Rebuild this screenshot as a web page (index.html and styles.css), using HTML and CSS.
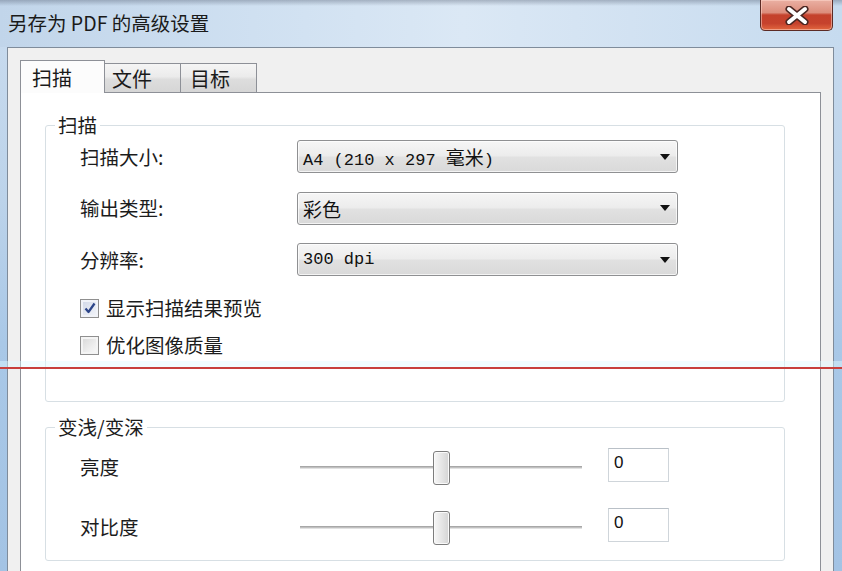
FILE: index.html
```html
<!DOCTYPE html>
<html lang="zh-CN">
<head>
<meta charset="utf-8">
<title>另存为 PDF 的高级设置</title>
<link rel="stylesheet" href="styles.css">
</head>
<body>
<div class="window">
  <div class="titlebar">
    <div class="title">另存为 PDF 的高级设置</div>
    <div class="close">
      <svg width="26" height="19" viewBox="0 0 26 19">
        <path d="M5 3 L21 16 M21 3 L5 16" stroke="#4a2622" stroke-width="7" stroke-linecap="round" fill="none"/>
        <path d="M5 3 L21 16 M21 3 L5 16" stroke="#ffffff" stroke-width="4" stroke-linecap="round" fill="none"/>
      </svg>
    </div>
  </div>
  <div class="client">
    <div class="tabs">
      <div class="tab active">扫描</div>
      <div class="tab t2">文件</div>
      <div class="tab t3">目标</div>
    </div>
    <div class="panel">
      <div class="group g-scan">
        <div class="legend">扫描</div>
        <div class="form-grid">
          <div class="lbl">扫描大小:</div>
          <div class="select"><span class="val">A4 (210 x 297 <span class="cjk">毫米</span>)</span><span class="arrow"></span></div>
          <div class="lbl">输出类型:</div>
          <div class="select"><span class="val"><span class="cjk">彩色</span></span><span class="arrow"></span></div>
          <div class="lbl">分辨率:</div>
          <div class="select"><span class="val">300 dpi</span><span class="arrow"></span></div>
        </div>
        <div class="checks">
          <div class="check"><span class="box checked"><svg width="14" height="14" viewBox="0 0 14 14"><path d="M2.5 7.5 L5.5 11 L11.5 2.5" stroke="#2b4488" stroke-width="2.2" fill="none" stroke-linejoin="round"/></svg></span><span>显示扫描结果预览</span></div>
          <div class="check"><span class="box"></span><span>优化图像质量</span></div>
        </div>
      </div>
      <div class="group g-tone">
        <div class="legend">变浅/变深</div>
        <div class="slider-row first">
          <div class="lbl">亮度</div>
          <div class="track"><div class="thumb"></div></div>
          <div class="num">0</div>
        </div>
        <div class="slider-row">
          <div class="lbl">对比度</div>
          <div class="track"><div class="thumb"></div></div>
          <div class="num">0</div>
        </div>
      </div>
    </div>
  </div>
  <div class="guide"></div>
</div>
</body>
</html>
```

FILE: styles.css
```css
html, body {
  margin: 0;
  padding: 0;
}
body {
  width: 842px;
  height: 571px;
  overflow: hidden;
  font-family: "Noto Sans CJK SC", "Liberation Sans", sans-serif;
  color: #1c1c1c;
}
.window {
  position: relative;
  width: 842px;
  height: 571px;
  display: flex;
  flex-direction: column;
  background: linear-gradient(to bottom, #cadcef 0, #bcd3ea 35%, #a9c8e7 60%, #a3c3e4 100%);
  overflow: hidden;
}
.titlebar {
  height: 47px;
  flex: none;
  display: flex;
  align-items: flex-start;
  padding: 0 9px 0 8px;
  background:
    linear-gradient(to bottom, rgba(70, 80, 100, 0.35) 0, rgba(70, 80, 100, 0) 6px),
    linear-gradient(to right, #c1d5ea 0, #cfe0f1 30%, #dbe8f5 55%, #d2e2f2 75%, #c6dbef 100%);
}
.title {
  margin-top: 10px;
  font-size: 19.5px;
  line-height: 26px;
  color: #1a1a1a;
}
.close {
  margin-left: auto;
  width: 73px;
  height: 31px;
  box-sizing: border-box;
  border: 1px solid #5c2b25;
  border-top: none;
  border-radius: 0 0 5px 5px;
  background: linear-gradient(to bottom, #eab0a3 0, #dc8d7c 42%, #c4412c 50%, #c6422d 78%, #e2673f 100%);
  display: flex;
  align-items: center;
  justify-content: center;
  box-shadow: inset 0 0 0 1px rgba(255, 220, 210, 0.5);
}
.client {
  flex: 1;
  margin: 0 8px 0 7px;
  border: 1px solid #7f8c9b;
  border-bottom: none;
  background: #f0f0f0;
  padding: 12px 12px 0 12px;
  display: flex;
  flex-direction: column;
}
.tabs {
  display: flex;
  align-items: flex-end;
  height: 33px;
  flex: none;
  position: relative;
  z-index: 1;
  margin-bottom: -1px;
}
.tab {
  box-sizing: border-box;
  height: 29px;
  width: 76px;
  margin-bottom: 1px;
  border: 1px solid #8d9097;
  border-left: none;
  border-bottom: none;
  background: linear-gradient(to bottom, #f5f5f5 0, #ebebeb 45%, #dddddd 55%, #d6d6d6 100%);
  font-size: 20px;
  line-height: 29px;
  padding-left: 7px;
  color: #1a1a1a;
}
.tab.t3 {
  padding-left: 9px;
}
.tab.active {
  height: 33px;
  width: 85px;
  margin-bottom: 0;
  border-left: 1px solid #8d9097;
  background: #fcfcfc;
  padding-left: 11px;
  padding-top: 3px;
  line-height: 28px;
}
.panel {
  flex: 1;
  border: 1px solid #8d9097;
  border-bottom: none;
  background: #ffffff;
  padding: 32px 35px 0 24px;
}
.group {
  border: 1px solid #d7dfe4;
  border-radius: 3px;
  padding: 0 34px 0 34px;
}
.g-scan {
  padding-bottom: 44px;
}
.g-tone {
  margin-top: 25px;
  padding-bottom: 14px;
}
.legend {
  width: max-content;
  margin: -13px 0 0 -25px;
  padding: 0 3px;
  background: #ffffff;
  font-size: 19.5px;
  line-height: 24px;
}
.lbl {
  font-size: 19.5px;
  line-height: 24px;
  color: #1c1c1c;
}
.form-grid {
  display: grid;
  grid-template-columns: 217px 381px;
  grid-auto-rows: 33px;
  row-gap: 18.5px;
  align-items: center;
  margin-top: 3px;
}
.select {
  box-sizing: border-box;
  height: 33px;
  border: 1px solid #8f9092;
  border-radius: 3px;
  background: linear-gradient(to bottom, #f6f6f6 0, #ececec 48%, #e1e1e1 52%, #d9d9d9 100%);
  box-shadow: inset 0 0 0 1px rgba(255, 255, 255, 0.7);
  display: flex;
  align-items: center;
  padding: 0 7px 0 5px;
  font-family: "Liberation Mono", "Noto Sans CJK SC", monospace;
  font-size: 17px;
  color: #111;
}
.select .cjk {
  font-family: "Noto Sans CJK SC", sans-serif;
  font-size: 19px;
}
.arrow {
  margin-left: auto;
  width: 0;
  height: 0;
  border-left: 5px solid transparent;
  border-right: 5px solid transparent;
  border-top: 6px solid #111;
}
.checks {
  margin-top: 20px;
  display: flex;
  flex-direction: column;
  gap: 13px;
}
.check {
  display: flex;
  align-items: center;
  gap: 7px;
  font-size: 19.5px;
  line-height: 24px;
}
.box {
  box-sizing: border-box;
  width: 19px;
  height: 19px;
  border: 1px solid #8f8f8f;
  background: linear-gradient(to bottom right, #d6d6d6 0, #eeeeee 60%, #fafafa 100%);
  box-shadow: inset 0 0 0 2px #f4f4f4;
  display: flex;
  align-items: center;
  justify-content: center;
}
.box.checked {
  background: linear-gradient(to bottom right, #cfd6e6 0, #e6eaf3 60%, #f4f6fa 100%);
  box-shadow: inset 0 0 0 2px #f1f3f8;
}
.slider-row {
  display: grid;
  grid-template-columns: 220px 282px 87px;
  align-items: center;
  height: 38px;
  margin-top: 22px;
}
.slider-row.first {
  margin-top: 9px;
}
.track {
  position: relative;
  height: 3px;
  background: linear-gradient(to bottom, #a8a8a8 0, #a8a8a8 1px, #d8d8d8 2px, #ececec 3px);
}
.thumb {
  position: absolute;
  left: 133px;
  top: -15px;
  width: 17px;
  height: 34px;
  box-sizing: border-box;
  border: 1px solid #7d7d7d;
  border-radius: 3px;
  background: linear-gradient(to right, #f7f7f7 0, #e6e6e6 50%, #d4d4d4 100%);
  box-shadow: inset 0 0 0 1px #fafafa;
}
.num {
  align-self: start;
  margin-left: 26px;
  box-sizing: border-box;
  height: 34px;
  border: 1px solid #cfd5da;
  border-top-color: #b9c0c7;
  padding: 3px 0 0 5px;
  font-family: "Liberation Sans", sans-serif;
  font-size: 17px;
  line-height: 22px;
  color: #111;
}
.guide {
  position: absolute;
  left: 0;
  right: 0;
  top: 367px;
  height: 2px;
  background: #c8403c;
  box-shadow: 0 -4px 0 2px rgba(225, 250, 255, 0.45);
}
```
